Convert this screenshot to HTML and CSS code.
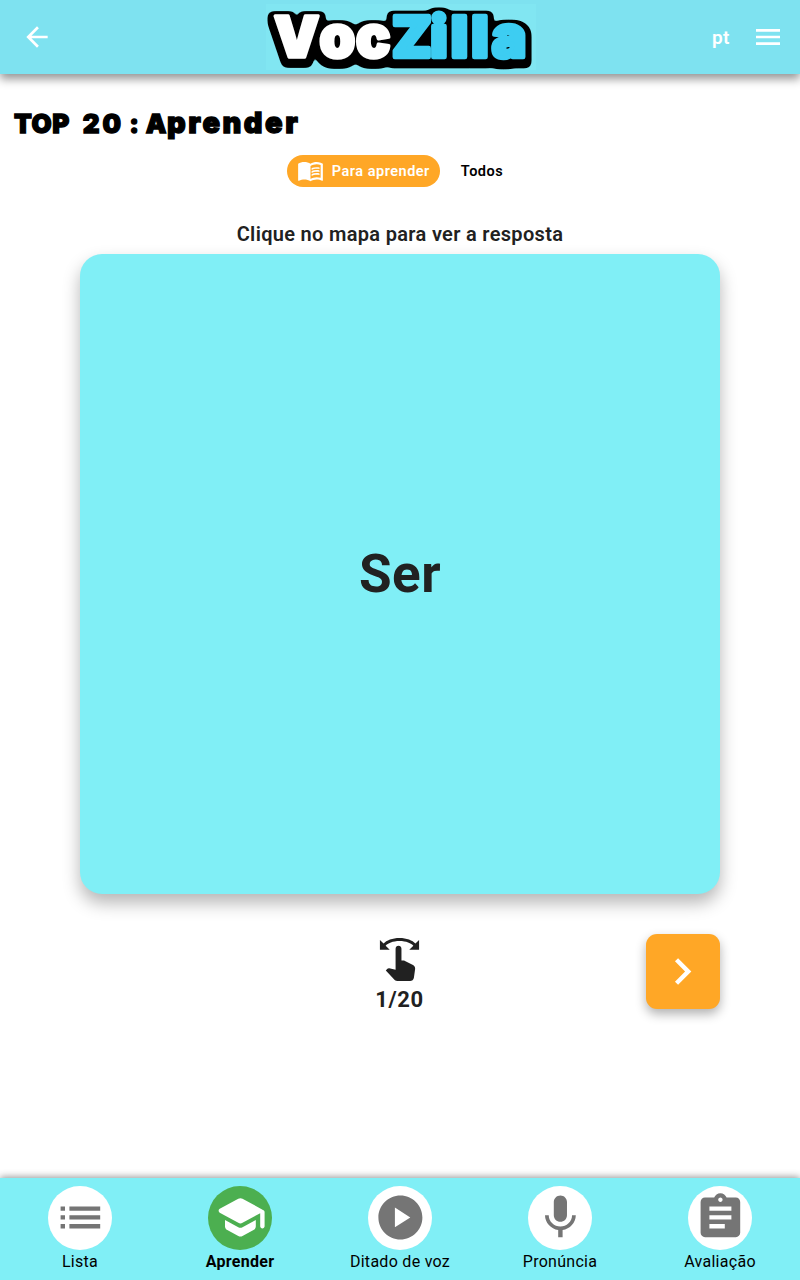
FILE: index.html
```html
<!DOCTYPE html>
<html lang="pt">
<head>
<meta charset="utf-8">
<title>VocZilla</title>
<link rel="stylesheet" href="styles.css">
</head>
<body>
<div class="app">
  <header class="topbar">
    <svg class="icon-32" viewBox="0 0 24 24"><path d="M20 11H7.83l5.59-5.59L12 4l-8 8 8 8 1.41-1.41L7.83 13H20z"/></svg>
    <svg class="logo" viewBox="0 0 270 66">
      <filter id="outline" x="-10%" y="-30%" width="120%" height="160%" color-interpolation-filters="sRGB">
        <feMorphology in="SourceAlpha" operator="dilate" radius="4"/>
        <feGaussianBlur stdDeviation="2.6"/>
        <feComponentTransfer><feFuncA type="linear" slope="9" intercept="-1.4"/></feComponentTransfer>
        <feOffset dy="2.5" result="edge"/>
        <feMerge><feMergeNode in="edge"/><feMergeNode in="SourceGraphic"/></feMerge>
      </filter>
      <text class="logo-text" filter="url(#outline)" y="52.5"><tspan class="logo-white" x="8 53.5 90">Voc</tspan><tspan class="logo-blue" x="126 164.500 185 205.500 226">Zilla</tspan></text>
    </svg>
    <div class="actions">
      <span class="lang">pt</span>
      <svg class="icon-32" viewBox="0 0 24 24"><path d="M3 18h18v-2H3v2zm0-5h18v-2H3v2zm0-7v2h18V6H3z"/></svg>
    </div>
  </header>

  <main class="content">
    <h1 class="title">TOP <span class="title-number">20 :</span> A<span class="title-lower">prender</span></h1>
    <div class="filters">
      <button class="chip chip-on">
        <svg class="chip-icon" viewBox="0 0 24 24"><path fill-rule="evenodd" d="M21 5c-1.11-.35-2.33-.5-3.5-.5-1.95 0-4.05.4-5.5 1.5-1.45-1.1-3.55-1.5-5.5-1.5S2.45 4.9 1 6v14.65c0 .25.25.5.5.5.1 0 .15-.05.25-.05C3.1 20.45 5.05 20 6.5 20c1.95 0 4.05.4 5.5 1.5 1.35-.85 3.8-1.5 5.5-1.5 1.65 0 3.35.3 4.75 1.05.1.05.15.05.25.05.25 0 .5-.25.5-.5V6c-.6-.45-1.25-.75-2-1zm0 13.5c-1.1-.35-2.3-.5-3.5-.5-1.7 0-4.15.65-5.5 1.5V8c1.35-.85 3.8-1.5 5.5-1.5 1.2 0 2.4.15 3.5.5v11.5z"/><path d="M17.5 10.5c.88 0 1.73.09 2.5.26V9.24c-.79-.15-1.64-.24-2.5-.24-1.7 0-3.24.29-4.5.83v1.66c1.13-.64 2.7-.99 4.5-.99zM13 12.49v1.66c1.13-.64 2.7-.99 4.5-.99.88 0 1.73.09 2.5.26V11.9c-.79-.15-1.64-.24-2.5-.24-1.7 0-3.24.3-4.5.83zM17.5 14.33c-1.7 0-3.24.29-4.5.83v1.66c1.13-.64 2.7-.99 4.5-.99.88 0 1.73.09 2.5.26v-1.52c-.79-.16-1.64-.24-2.5-.24z"/></svg>
        <span>Para aprender</span>
      </button>
      <button class="chip">Todos</button>
    </div>
    <p class="hint">Clique no mapa para ver a resposta</p>
    <section class="card">Ser</section>
    <div class="controls">
      <div class="counter">
        <svg class="swipe" viewBox="0 0 24 24"><path d="M18.89 14.75l-4.09-2.04c-.28-.14-.58-.21-.89-.21H13v-6C13 5.67 12.33 5 11.5 5S10 5.67 10 6.5v10.74l-3.25-.74c-.33-.07-.68.03-.92.28L5 17.62l4.54 4.79c.38.38 1.14.59 1.67.59h6.16c1 0 1.84-.73 1.98-1.72l.63-4.46c.12-.85-.32-1.68-1.09-2.07zM20.13 3.87C18.69 2.17 15.6 1 12 1S5.31 2.17 3.87 3.87L2 2v5h5L4.93 4.93c1-1.29 3.7-2.43 7.07-2.43s6.07 1.14 7.07 2.43L17 7h5V2l-1.87 1.87z"/></svg>
        <span class="count">1/20</span>
      </div>
      <button class="next"><svg viewBox="0 0 24 24"><path d="M10 6L8.59 7.41 13.17 12l-4.58 4.59L10 18l6-6z"/></svg></button>
    </div>
  </main>

  <nav class="tabs">
    <a class="tab"><span class="disc"><svg viewBox="0 0 24 24"><path d="M3 13h2v-2H3v2zm0 4h2v-2H3v2zm0-8h2V7H3v2zm4 4h14v-2H7v2zm0 4h14v-2H7v2zM7 7v2h14V7H7z"/></svg></span><span>Lista</span></a>
    <a class="tab tab-on"><span class="disc"><svg viewBox="0 0 24 24"><path d="M5 13.18v2.81c0 .73.4 1.41 1.04 1.76l5 2.73c.6.33 1.32.33 1.92 0l5-2.73c.64-.35 1.04-1.03 1.04-1.76v-2.81l-6.04 3.3c-.6.33-1.32.33-1.92 0L5 13.18zm6.04-9.66l-8.43 4.6c-.69.38-.69 1.38 0 1.76l8.43 4.6c.6.33 1.32.33 1.92 0L21 10.09V16c0 .55.45 1 1 1s1-.45 1-1V9.59c0-.37-.2-.7-.52-.88l-9.52-5.19c-.6-.32-1.32-.32-1.92 0z"/></svg></span><span>Aprender</span></a>
    <a class="tab"><span class="disc"><svg viewBox="0 0 24 24"><path d="M12 2C6.48 2 2 6.48 2 12s4.48 10 10 10 10-4.48 10-10S17.52 2 12 2zm-2.5 14.5v-9l7 4.5-7 4.5z"/></svg></span><span>Ditado de voz</span></a>
    <a class="tab"><span class="disc"><svg viewBox="0 0 24 24"><path d="M12 14c1.66 0 2.99-1.34 2.99-3L15 5c0-1.66-1.34-3-3-3S9 3.34 9 5v6c0 1.66 1.34 3 3 3zm5.3-3c0 3-2.54 5.1-5.3 5.1S6.7 14 6.7 11H5c0 3.41 2.72 6.23 6 6.72V21h2v-3.28c3.28-.48 6-3.3 6-6.72h-1.7z"/></svg></span><span>Pronúncia</span></a>
    <a class="tab"><span class="disc"><svg viewBox="0 0 24 24"><path d="M19 3h-4.18C14.4 1.84 13.3 1 12 1s-2.4.84-2.82 2H5c-1.1 0-2 .9-2 2v14c0 1.1.9 2 2 2h14c1.1 0 2-.9 2-2V5c0-1.1-.9-2-2-2zm-7 0c.55 0 1 .45 1 1s-.45 1-1 1-1-.45-1-1 .45-1 1-1zm2 14H7v-2h7v2zm3-4H7v-2h10v2zm0-4H7V7h10v2z"/></svg></span><span>Avaliação</span></a>
  </nav>
</div>
</body>
</html>
```
FILE: styles.css
```css
* { box-sizing: border-box; }
body { margin: 0; background: #fff; font-family: Roboto, "Noto Sans", sans-serif; color: #212121; }
button { border: 0; padding: 0; background: none; font: inherit; color: inherit; }
svg { display: block; fill: currentColor; }
.app { display: flex; flex-direction: column; height: 1280px; overflow: hidden; }

.topbar { height: 74px; flex: none; display: grid; grid-template-columns: 1fr 270px 1fr; align-items: center; padding: 0 16px 0 21px; background: #7ee2f0; color: #fff; box-shadow: 0 5px 9px rgba(0, 0, 0, .42); }
.icon-32 { width: 32px; height: 32px; }
.logo { width: 270px; height: 66px; margin-left: -2px; background: #81e6f2; overflow: visible; }
.logo-text { font: 900 57px Inter, sans-serif; stroke-linejoin: round; }
.logo-white { fill: #fff; stroke: #fff; stroke-width: 3.5px; }
.logo-blue { fill: #3dcdf2; stroke: #3dcdf2; stroke-width: 4.5px; }
.actions { display: flex; justify-content: flex-end; align-items: center; gap: 22px; }
.lang { font-size: 19px; font-weight: 600; letter-spacing: .5px; }

.content { flex: 1; display: flex; flex-direction: column; }
.title { margin: 30px 0 0 14px; height: 40px; font: 900 26px/40px Inter, sans-serif; letter-spacing: .6px; color: #000; -webkit-text-stroke: 1.3px #000; white-space: nowrap; }
.title-number { letter-spacing: 3px; word-spacing: -3px; margin: 0 -2px 0 7px; }
.title-lower { font-size: 29px; line-height: 1; letter-spacing: 2.5px; }
.filters { display: flex; justify-content: center; align-items: center; margin: 10.5px 0 0 11px; }
.chip { height: 32px; display: flex; align-items: center; gap: 8px; padding: 1px 21px 0; font-size: 14.5px; font-weight: 600; letter-spacing: .5px; color: #000; }
.chip-on { padding: 0 10px; border-radius: 16px; background: #ffa726; color: #fff; }
.chip-on span { padding-top: 1px; }
.chip-icon { width: 27px; height: 27px; }
.hint { margin: 35.5px 0 0; height: 32px; line-height: 24px; text-align: center; font-size: 20px; font-weight: 600; letter-spacing: .32px; }
.card { width: 640px; height: 640px; flex: none; margin: 0 auto; display: grid; place-items: center; border-radius: 22px; background: #80eff6; box-shadow: 0 9px 17px rgba(0, 0, 0, .29); font-size: 53px; font-weight: 700; letter-spacing: .5px; }
.controls { width: 640px; margin: 40px auto 0; display: grid; grid-template-columns: 74.5px 1fr 74.5px; }
.counter { grid-column: 2; display: flex; flex-direction: column; align-items: center; padding: 2px 1px 0 0; }
.swipe { width: 47px; height: 47px; }
.count { font-size: 22px; line-height: 28px; margin-top: 3px; font-weight: 700; letter-spacing: .6px; }
.next { height: 75px; display: grid; place-items: center; border-radius: 11px; background: #ffa726; color: #fff; box-shadow: 0 5px 11px rgba(0, 0, 0, .31); }
.next svg { width: 53px; height: 53px; }

.tabs { height: 102.5px; flex: none; display: grid; grid-template-columns: repeat(5, 1fr); background: #80eff6; box-shadow: 0 -1px 7px rgba(0, 0, 0, .42); }
.tab { display: flex; flex-direction: column; align-items: center; padding-top: 8px; font-size: 16px; line-height: 24px; letter-spacing: .28px; color: #000; }
.disc { width: 64px; height: 64px; display: grid; place-items: center; border-radius: 50%; background: #fff; color: #757575; }
.disc svg { width: 52.8px; height: 52.8px; }
.tab-on { font-weight: 700; }
.tab-on .disc { background: #4caf50; color: #fff; }
```
